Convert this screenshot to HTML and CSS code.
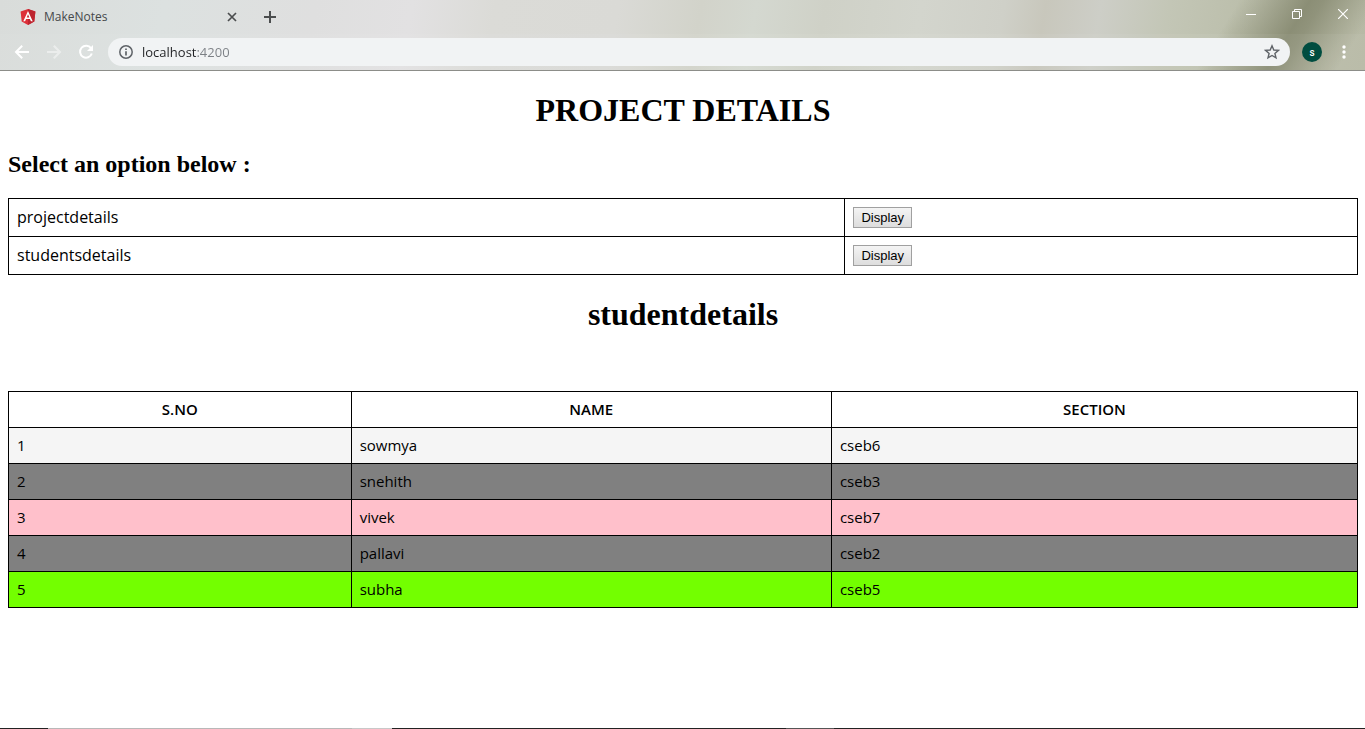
FILE: index.html
```html
<!DOCTYPE html>
<html lang="en">
<head>
<meta charset="utf-8">
<title>MakeNotes</title>
<link rel="stylesheet" href="styles.css">
</head>
<body>
<header class="browser">
  <div class="tabstrip">
    <div class="tab">
      <svg class="icon" width="16" height="16" viewBox="0 0 16 16" aria-hidden="true"><path fill="#dd3039" d="M8 0 15.4 2.6 14.3 12.4 8 16 1.7 12.4.6 2.6z"/><path fill="#bd252f" d="M8 0 15.4 2.6 14.3 12.4 8 16z"/><path fill="#fff" fill-rule="evenodd" d="M8 1.9 12.7 12.2H10.9L9.9 9.9H6.1L5.1 12.2H3.3zM8 5.3 6.7 8.4H9.3z"/></svg>
      <span class="tab-title">MakeNotes</span>
      <button class="icon-button tab-close" aria-label="Close tab"><svg width="10" height="10" viewBox="0 0 10 10"><path d="M1 1 9 9M9 1 1 9" stroke="#4b4d4e" stroke-width="1.7"/></svg></button>
    </div>
    <button class="icon-button new-tab" aria-label="New tab"><svg width="12" height="12" viewBox="0 0 12 12"><path d="M6 0V12M0 6H12" stroke="#4b4d4e" stroke-width="2"/></svg></button>
    <div class="window-controls">
      <button class="icon-button" aria-label="Minimize"><svg width="10" height="10" viewBox="0 0 10 10"><path d="M0 5.5H10" stroke="#fff"/></svg></button>
      <button class="icon-button" aria-label="Restore"><svg width="10" height="10" viewBox="0 0 10 10"><path d="M.5 2.5H7.5V9.5H.5zM2.5 2.5V.5H9.5V7.5H7.5" fill="none" stroke="#fff"/></svg></button>
      <button class="icon-button" aria-label="Close"><svg width="10" height="10" viewBox="0 0 10 10"><path d="M0 0 10 10M10 0 0 10" stroke="#fff" stroke-width="1.2"/></svg></button>
    </div>
  </div>
  <div class="toolbar">
    <nav class="nav" aria-label="History">
      <button class="icon-button" aria-label="Back"><svg width="16" height="16" viewBox="0 0 16 16"><path d="M15 8H2.5M8.2 1.8 2 8l6.2 6.2" fill="none" stroke="#fff" stroke-width="2"/></svg></button>
      <button class="icon-button faded" aria-label="Forward"><svg width="16" height="16" viewBox="0 0 16 16"><path d="M1 8H13.5M7.8 1.8 14 8l-6.2 6.2" fill="none" stroke="#fff" stroke-width="2"/></svg></button>
      <button class="icon-button" aria-label="Reload"><svg width="16" height="16" viewBox="0 0 16 16"><path d="M13 4.2A6 6 0 1 0 13.8 9.5" fill="none" stroke="#fff" stroke-width="2"/><path d="M15 1V7H9z" fill="#fff"/></svg></button>
    </nav>
    <div class="address">
      <svg class="icon" width="16" height="16" viewBox="0 0 16 16" aria-hidden="true"><circle cx="8" cy="8" r="6.2" fill="none" stroke="#5f6368" stroke-width="1.5"/><path d="M8 7.2V11.4M8 4.4V6" stroke="#5f6368" stroke-width="1.7"/></svg>
      <input class="url" type="text" value="localhost:4200" aria-label="Address">
      <button class="icon-button" aria-label="Bookmark"><svg width="16" height="16" viewBox="0 0 16 16"><path d="M8 1.8 9.8 6 14.4 6.4 10.9 9.4 12 13.9 8 11.5 4 13.9 5.1 9.4 1.6 6.4 6.2 6z" fill="none" stroke="#5f6368" stroke-width="1.4"/></svg></button>
    </div>
    <button class="profile" aria-label="Profile S">s</button>
    <button class="icon-button" aria-label="Menu"><svg width="4" height="14" viewBox="0 0 4 14" fill="#fff"><circle cx="2" cy="2" r="1.7"/><circle cx="2" cy="7" r="1.7"/><circle cx="2" cy="12" r="1.7"/></svg></button>
  </div>
</header>
<main class="page">
  <h1 class="title">PROJECT DETAILS</h1>
  <h2 class="subtitle">Select an option below :</h2>
  <table class="grid options">
    <colgroup><col class="option-name"><col></colgroup>
    <tbody>
      <tr><td id="option-project">projectdetails</td><td><button class="display" aria-describedby="option-project">Display</button></td></tr>
      <tr><td id="option-students">studentsdetails</td><td><button class="display" aria-describedby="option-students">Display</button></td></tr>
    </tbody>
  </table>
  <h1 class="title section-title">studentdetails</h1>
  <table class="grid students">
    <colgroup><col class="number"><col class="name"><col></colgroup>
    <thead><tr><th scope="col">S.NO</th><th scope="col">NAME</th><th scope="col">SECTION</th></tr></thead>
    <tbody>
      <tr class="row-light"><td>1</td><td>sowmya</td><td>cseb6</td></tr>
      <tr class="row-gray"><td>2</td><td>snehith</td><td>cseb3</td></tr>
      <tr class="row-pink"><td>3</td><td>vivek</td><td>cseb7</td></tr>
      <tr class="row-gray"><td>4</td><td>pallavi</td><td>cseb2</td></tr>
      <tr class="row-green"><td>5</td><td>subha</td><td>cseb5</td></tr>
    </tbody>
  </table>
</main>
<footer class="taskbar-edge"></footer>
</body>
</html>
```
FILE: styles.css
```css
* { box-sizing: border-box; }

body {
  margin: 0;
  min-height: 100vh;
  display: flex;
  flex-direction: column;
  background: #fff;
  color: #000;
  font-family: "Liberation Serif", serif;
}

.browser {
  border-bottom: 1px solid #8c8d89;
  font-family: "Open Sans", sans-serif;
  background:
    linear-gradient(122deg, transparent 88%, rgba(134, 137, 112, 0.9) 93%, rgba(134, 137, 112, 0.8) 94%, transparent 98%),
    linear-gradient(100deg, #d9dcda 0%, #dce1e0 12%, #dfdfdf 23%, #e2e1e2 30%, #dbdbd7 36%, #dadad6 45%, #d2d3ca 51%, #d4d8d0 55%, #cfd1c7 60%, #d3d5cd 67%, #cfd0c8 73%, #c8c7bc 76%, #cdcec7 80%, #c3c6b6 85%, #bcbfac 90%, #b7b9a5 100%);
}

.icon-button {
  border: 0;
  padding: 0;
  background: none;
  display: flex;
  align-items: center;
  justify-content: center;
}

.icon { flex: none; }

.tabstrip {
  height: 34px;
  display: flex;
  align-items: center;
}

.tab {
  width: 256px;
  padding: 0 19px 0 20px;
  display: flex;
  align-items: center;
  gap: 8px;
}

.tab-title {
  flex: 1;
  font-size: 12px;
  line-height: 16px;
  color: #45484a;
}

.new-tab { width: 28px; height: 28px; }

.window-controls {
  margin: 0 -1px 0 auto;
  align-self: flex-start;
  display: flex;
}

.window-controls .icon-button { width: 46px; height: 28px; }

.toolbar {
  height: 36px;
  padding: 0 19px 0 14px;
  display: flex;
  align-items: center;
  gap: 12px;
  background: rgba(255, 255, 255, 0.05);
}

.nav {
  margin-right: 2px;
  display: flex;
  gap: 16px;
}

.nav .icon-button { width: 16px; height: 16px; }

.nav .faded { opacity: 0.45; }

.address {
  flex: 1;
  height: 28px;
  padding: 0 10px;
  display: flex;
  align-items: center;
  gap: 8px;
  border-radius: 14px;
  background: #f1f3f4;
}

.url {
  flex: 1;
  min-width: 0;
  height: 20px;
  padding: 0;
  border: 0;
  font: 13px "Open Sans", sans-serif;
  color: transparent;
  background: linear-gradient(90deg, #202124 55px, #7b7f84 55px);
  background-clip: text;
  -webkit-background-clip: text;
}

.profile {
  width: 20px;
  height: 20px;
  margin-right: 8px;
  padding: 0;
  border: 0;
  border-radius: 50%;
  background: #004d40;
  color: #fff;
  font: 500 10px Roboto, sans-serif;
}

.page {
  flex: 1;
  padding: 21px 7px 21px 8px;
}

.title {
  margin: 0;
  font-size: 32px;
  line-height: 37px;
  text-align: center;
}

.subtitle {
  margin: 21px 0 20px;
  font-size: 24px;
  line-height: 28px;
}

.section-title { margin: 21px 0 58px; }

.grid {
  width: 100%;
  table-layout: fixed;
  border-collapse: collapse;
  font: 15px/19px "Open Sans", sans-serif;
}

.grid th,
.grid td {
  padding: 8px;
  border: 1px solid #000;
}

.grid th { font-weight: 600; }

.grid td { text-align: left; }

.options { font-size: 16px; }

.options td { height: 38px; }

.option-name { width: 62%; }

.number { width: 25.4%; }

.name { width: 35.6%; }

.row-light { background: #f5f5f5; }

.row-gray { background: #808080; }

.row-pink { background: #ffc0cb; }

.row-green { background: #73ff00; }

.display {
  display: block;
  height: 21px;
  padding: 1px 7px;
  border: 1px solid #a0a0a0;
  background: linear-gradient(#f4f4f4, #dddddd);
  color: #000;
  font: 13px "Liberation Sans", Arial, sans-serif;
}

.taskbar-edge {
  height: 1px;
  background: linear-gradient(90deg, #222 48px, #b8b8b8 48px, #b8b8b8 352px, #c8c8c8 352px, #c8c8c8 392px, #222 392px, #222 786px, #555 786px, #555 834px, #222 834px);
}
```
